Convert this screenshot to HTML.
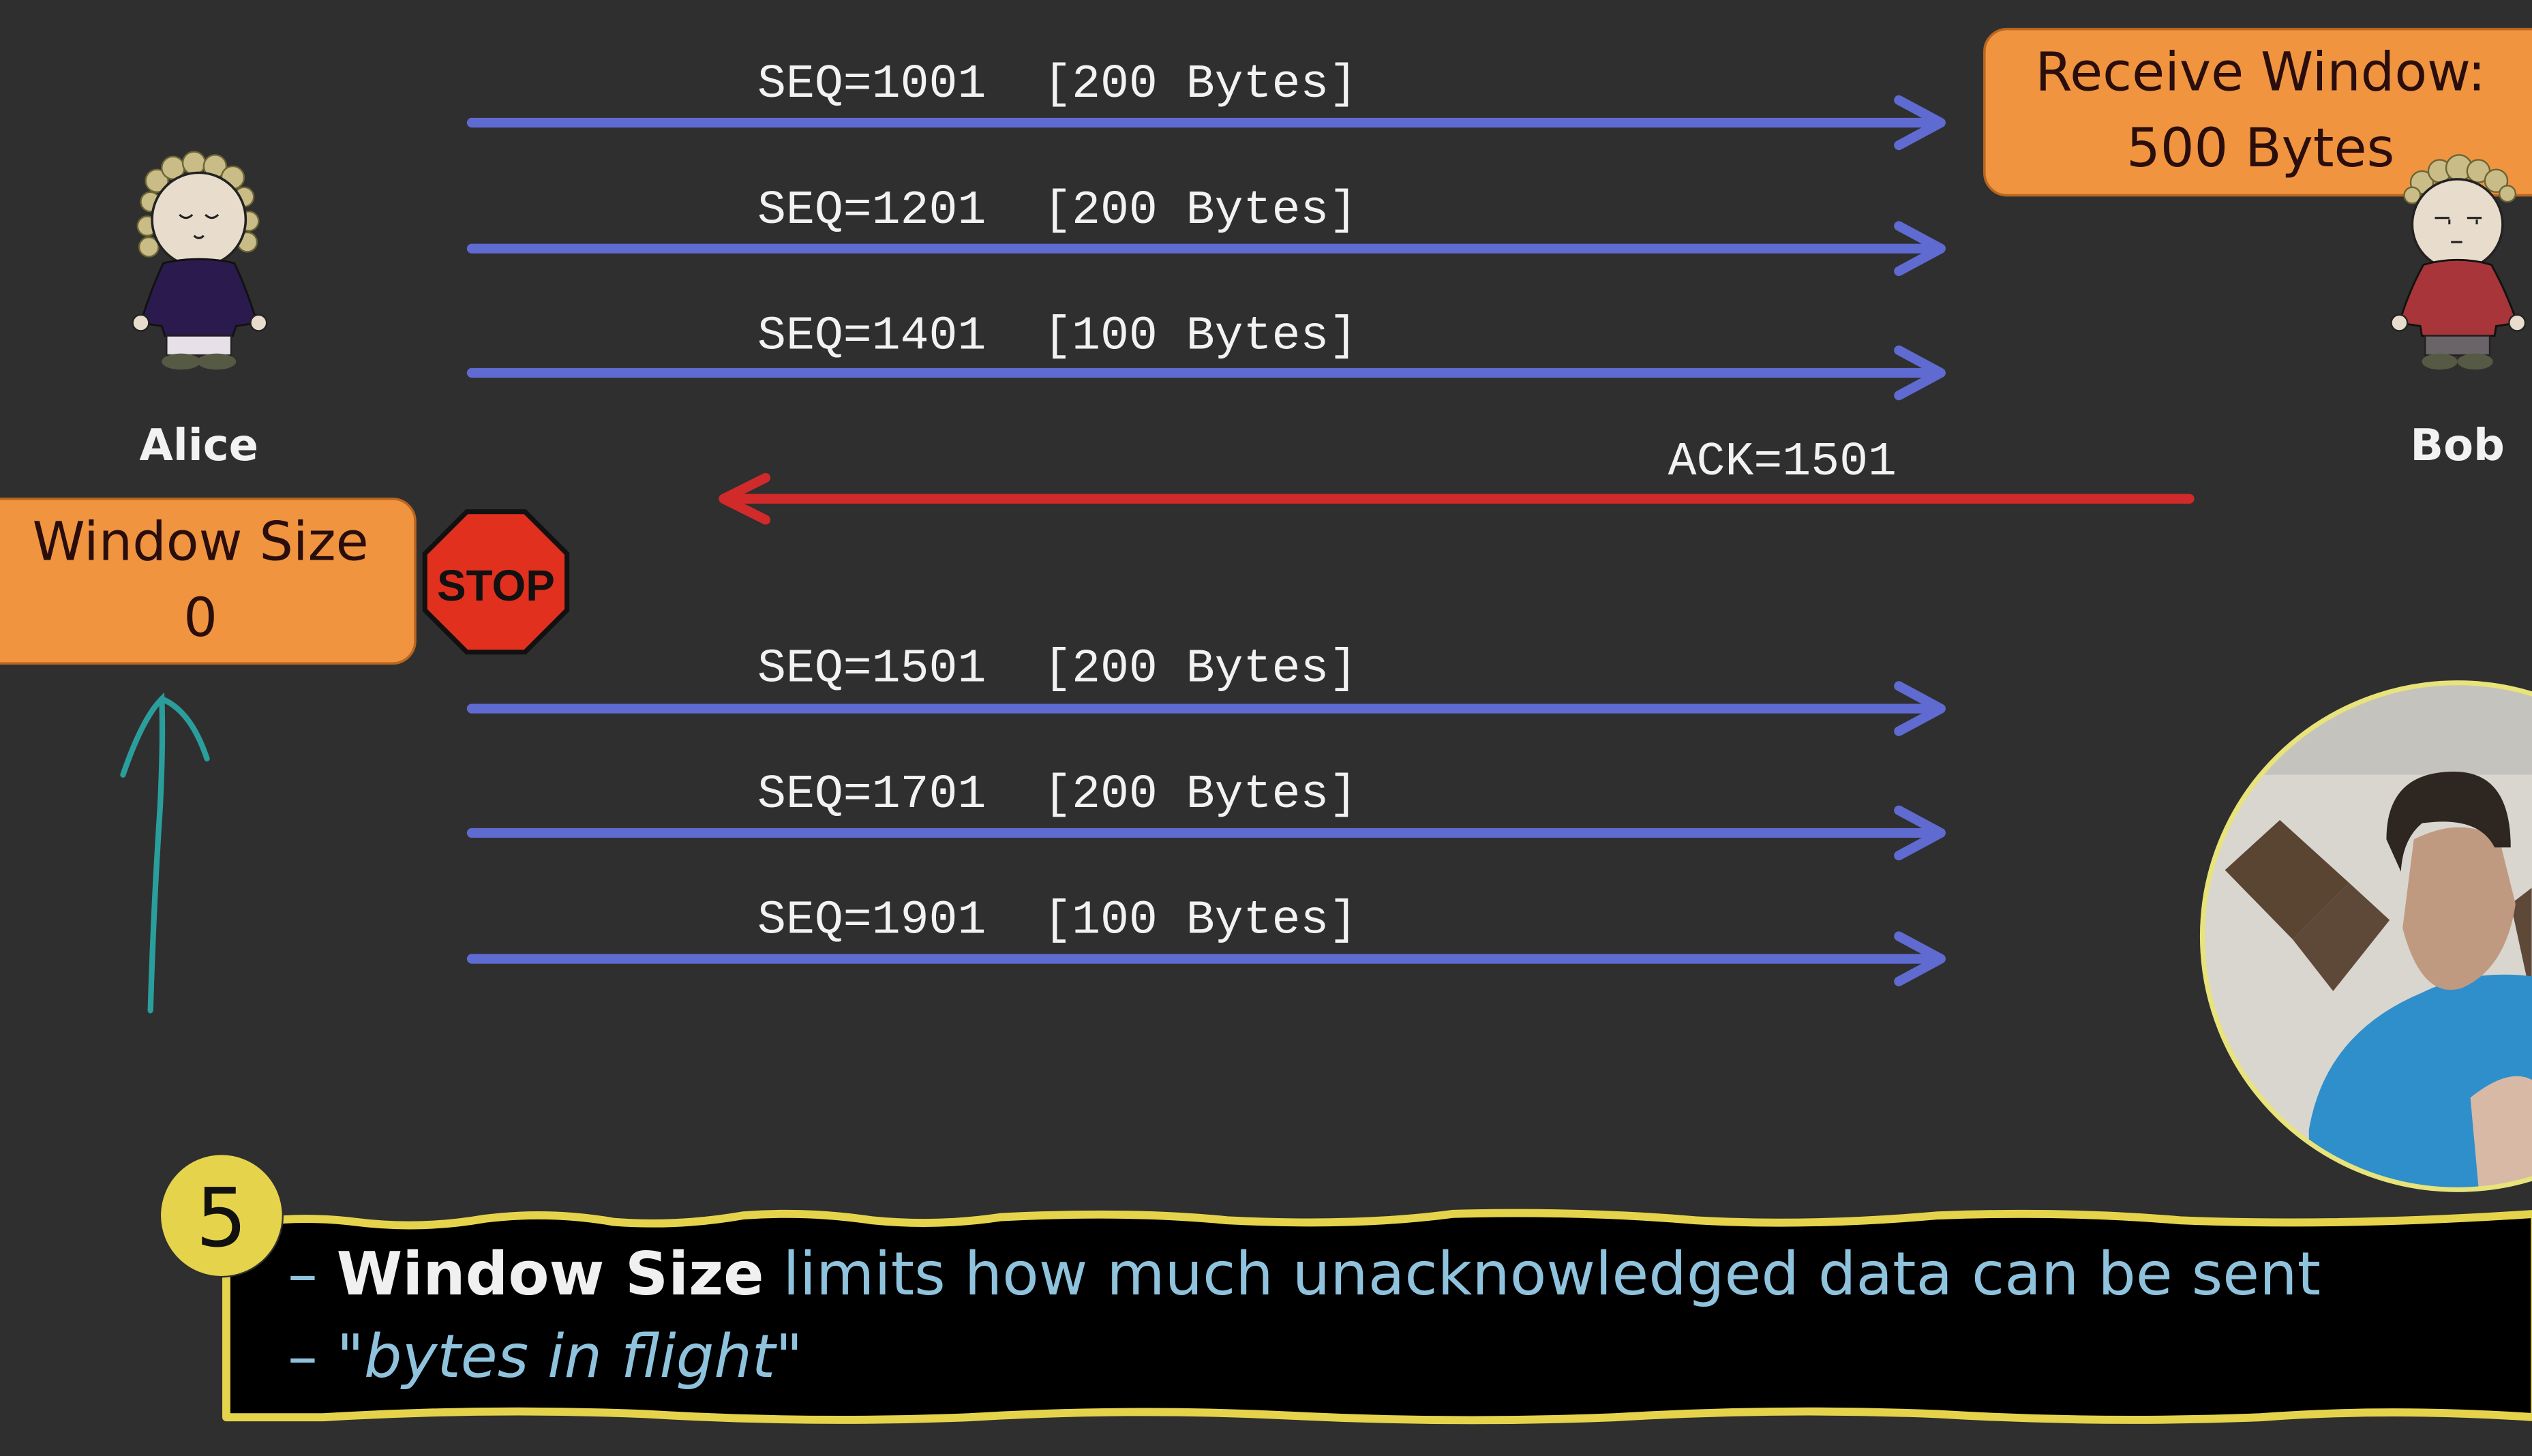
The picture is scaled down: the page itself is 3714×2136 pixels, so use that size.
<!DOCTYPE html>
<html><head><meta charset="utf-8"><style>
html,body{margin:0;padding:0;background:#2f2f2f;}
svg{display:block;}
</style></head><body>
<svg width="3714" height="2136" viewBox="0 0 1568 902" xmlns="http://www.w3.org/2000/svg">
<rect width="1568" height="902" fill="#2f2f2f"/>
<g stroke="#5f6bd0" stroke-width="6" stroke-linecap="round" fill="none" stroke-linejoin="round">
<line x1="292" y1="76" x2="1200" y2="76"/><polyline points="1176,62 1202,76 1176,90"/>
<line x1="292" y1="154" x2="1200" y2="154"/><polyline points="1176,140 1202,154 1176,168"/>
<line x1="292" y1="231" x2="1200" y2="231"/><polyline points="1176,217 1202,231 1176,245"/>
<line x1="292" y1="439" x2="1200" y2="439"/><polyline points="1176,425 1202,439 1176,453"/>
<line x1="292" y1="516" x2="1200" y2="516"/><polyline points="1176,502 1202,516 1176,530"/>
<line x1="292" y1="594" x2="1200" y2="594"/><polyline points="1176,580 1202,594 1176,608"/>
</g>
<g stroke="#d12a2a" stroke-width="6" stroke-linecap="round" fill="none" stroke-linejoin="round">
<line x1="450" y1="309" x2="1356" y2="309"/><polyline points="474,296 448,309 474,322"/>
</g>
<g font-family="Liberation Mono, monospace" font-size="29.5" fill="#f2f2f2">
<text x="469" y="60">SEQ=1001&#160;&#160;[200&#160;Bytes]</text>
<text x="469" y="138">SEQ=1201&#160;&#160;[200&#160;Bytes]</text>
<text x="469" y="216">SEQ=1401&#160;&#160;[100&#160;Bytes]</text>
<text x="469" y="422">SEQ=1501&#160;&#160;[200&#160;Bytes]</text>
<text x="469" y="500">SEQ=1701&#160;&#160;[200&#160;Bytes]</text>
<text x="469" y="578">SEQ=1901&#160;&#160;[100&#160;Bytes]</text>
<text x="1033" y="294">ACK=1501</text>
</g>
<rect x="1229" y="18" width="360" height="103" rx="14" fill="#f0943f" stroke="#b8661f" stroke-width="1.5"/>
<g font-family="DejaVu Sans, Liberation Sans, sans-serif" font-size="33" fill="#2a0e0e" text-anchor="middle">
<text x="1400" y="56">Receive Window:</text>
<text x="1400" y="103">500 Bytes</text>
</g>
<rect x="-14" y="309" width="271" height="102" rx="14" fill="#f0943f" stroke="#b8661f" stroke-width="1.5"/>
<g font-family="DejaVu Sans, Liberation Sans, sans-serif" font-size="33" fill="#2a0e0e" text-anchor="middle">
<text x="124" y="347">Window Size</text>
<text x="124" y="394">0</text>
</g>
<polygon points="289,317 325,317 351,343 351,378 325,404 289,404 263,378 263,343" fill="#e2301f" stroke="#111" stroke-width="3"/>
<text x="307" y="372" font-family="Liberation Sans, sans-serif" font-weight="bold" font-size="27" fill="#111" text-anchor="middle">STOP</text>
<g>
<g fill="#c9bc86" stroke="#6b6436" stroke-width="1">
<circle cx="97" cy="112" r="7"/><circle cx="107" cy="104" r="7"/><circle cx="120" cy="101" r="7"/><circle cx="133" cy="103" r="7"/><circle cx="144" cy="110" r="7"/><circle cx="151" cy="122" r="6"/><circle cx="154" cy="137" r="6"/><circle cx="153" cy="150" r="6"/><circle cx="93" cy="125" r="6"/><circle cx="91" cy="140" r="6"/><circle cx="92" cy="153" r="6"/>
</g>
<circle cx="123" cy="136" r="29" fill="#e8dccd" stroke="#222" stroke-width="1.5"/>
<path d="M111 133q4 4 8 0M127 133q4 4 8 0M120 146q3 3 6 0" stroke="#222" stroke-width="1.3" fill="none"/>
<path d="M101 163 Q93 180 87 200 L100 202 L102 208 L144 208 L146 202 L159 200 Q153 180 145 163 Q123 158 101 163Z" fill="#2b1a4d" stroke="#111" stroke-width="1.2"/>
<circle cx="87" cy="200" r="5" fill="#e8dccd" stroke="#222"/><circle cx="160" cy="200" r="5" fill="#e8dccd" stroke="#222"/>
<rect x="103" y="208" width="40" height="12" fill="#e8e0e8" stroke="#222" stroke-width="1"/>
<ellipse cx="112" cy="224" rx="12" ry="5" fill="#565a44"/><ellipse cx="134" cy="224" rx="12" ry="5" fill="#565a44"/>
</g>
<text x="123" y="285" font-family="DejaVu Sans, Liberation Sans, sans-serif" font-weight="bold" font-size="27" fill="#f2f2f2" text-anchor="middle">Alice</text>
<g>
<g fill="#c9bc86" stroke="#6b6436" stroke-width="1">
<circle cx="1500" cy="113" r="7"/><circle cx="1511" cy="106" r="7"/><circle cx="1523" cy="104" r="8"/><circle cx="1535" cy="106" r="7"/><circle cx="1546" cy="112" r="7"/><circle cx="1553" cy="120" r="5"/><circle cx="1494" cy="121" r="5"/>
</g>
<circle cx="1522" cy="139" r="28" fill="#e8dccd" stroke="#222" stroke-width="1.5"/>
<path d="M1508 135h9M1528 135h9M1517 136v3M1534 136v3M1518 150h7" stroke="#222" stroke-width="1.3" fill="none"/>
<path d="M1501 164 Q1492 180 1486 200 L1499 202 L1500 208 L1545 208 L1546 202 L1559 200 Q1552 180 1543 164 Q1522 158 1501 164Z" fill="#a8353a" stroke="#111" stroke-width="1.2"/>
<circle cx="1486" cy="200" r="5" fill="#e8dccd" stroke="#222"/><circle cx="1559" cy="200" r="5" fill="#e8dccd" stroke="#222"/>
<rect x="1502" y="208" width="40" height="12" fill="#6a6468" stroke="#222" stroke-width="1"/>
<ellipse cx="1511" cy="224" rx="11" ry="5" fill="#565a44"/><ellipse cx="1533" cy="224" rx="11" ry="5" fill="#565a44"/>
</g>
<text x="1522" y="285" font-family="DejaVu Sans, Liberation Sans, sans-serif" font-weight="bold" font-size="27" fill="#f2f2f2" text-anchor="middle">Bob</text>
<path d="M93 626 Q95 560 99 500 Q101 460 100 433 Q88 445 76 480 M100 433 Q118 440 128 470" stroke="#2a9e9c" stroke-width="3.5" fill="none" stroke-linecap="round"/>
<defs><clipPath id="cam"><ellipse cx="1522" cy="580" rx="158" ry="157"/></clipPath></defs>
<g clip-path="url(#cam)">
<rect x="1360" y="420" width="210" height="320" fill="#d9d6cf"/>
<rect x="1360" y="420" width="210" height="60" fill="#c5c3be"/>
<polygon points="1378,539 1412,508 1455,547 1420,582" fill="#5a4533"/>
<polygon points="1420,582 1455,547 1480,570 1445,614" fill="#5e4838"/>
<polygon points="1555,560 1568,550 1568,620" fill="#5e4838"/>
<path d="M1430 700 Q1440 640 1500 615 Q1530 600 1570 605 L1570 740 L1430 740Z" fill="#2f8fcb"/>
<path d="M1488 575 Q1500 620 1525 612 Q1552 600 1558 560 L1548 520 Q1525 505 1495 520Z" fill="#c09a80"/>
<path d="M1478 520 Q1478 478 1520 478 Q1555 478 1555 525 L1545 525 Q1535 505 1500 510 Q1488 520 1487 540Z" fill="#2e2620"/>
<path d="M1530 680 Q1555 660 1570 670 L1570 740 L1535 735Z" fill="#d7b9a6"/>
</g>
<ellipse cx="1522" cy="580" rx="158" ry="157" fill="none" stroke="#e8e37a" stroke-width="3"/>
<path d="M140 760 Q180 752 220 757 Q260 762 300 755 Q340 750 380 757 Q420 760 460 753 Q500 750 540 756 Q580 760 620 754 Q700 750 760 756 Q840 760 900 752 Q980 750 1050 756 Q1120 760 1200 753 Q1280 750 1350 756 Q1450 760 1570 752 L1570 878 Q1480 872 1400 878 Q1300 882 1200 876 Q1100 872 1000 878 Q900 882 800 877 Q700 872 600 878 Q500 882 400 876 Q300 872 200 878 L140 878 Z" fill="#000" stroke="#e5d44b" stroke-width="5" stroke-linejoin="round"/>
<circle cx="137" cy="753" r="38" fill="#e5d44b" stroke="#2f2f2f" stroke-width="1"/>
<text x="137" y="772" font-family="DejaVu Sans, Liberation Sans, sans-serif" font-size="50" fill="#111" text-anchor="middle">5</text>
<text x="178" y="802" font-family="DejaVu Sans, Liberation Sans, sans-serif" font-size="37" fill="#8fc3dd">–&#160;<tspan fill="#f0f0f0" font-weight="bold">Window Size</tspan>&#160;limits how much unacknowledged data can be sent</text>
<text x="178" y="853" font-family="DejaVu Sans, Liberation Sans, sans-serif" font-size="37" fill="#8fc3dd">–&#160;<tspan font-style="italic">"bytes in flight"</tspan></text>
</svg>
</body></html>
